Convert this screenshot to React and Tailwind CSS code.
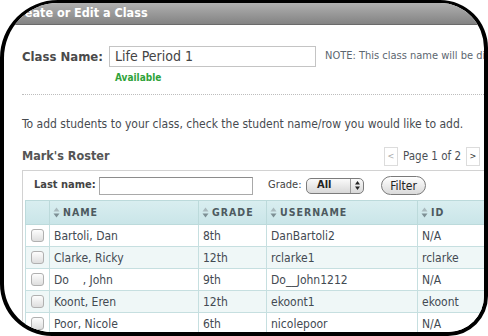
import React from 'react';

const rows = [
  { name: 'Bartoli, Dan', grade: '8th', user: 'DanBartoli2', id: 'N/A' },
  { name: 'Clarke, Ricky', grade: '12th', user: 'rclarke1', id: 'rclarke' },
  { name: 'Do    , John', grade: '9th', user: 'Do__John1212', id: 'N/A' },
  { name: 'Koont, Eren', grade: '12th', user: 'ekoont1', id: 'ekoont' },
  { name: 'Poor, Nicole', grade: '6th', user: 'nicolepoor', id: 'N/A' },
];

function SortArrows() {
  return (
    <svg width="7" height="11" viewBox="0 0 7 11" className="mr-[3px] shrink-0">
      <polygon points="3.5,0.5 6.5,4.5 0.5,4.5" fill="#a9b9bd" />
      <polygon points="0.5,6.5 6.5,6.5 3.5,10.5" fill="#7d8f94" />
    </svg>
  );
}

function Checkbox() {
  return (
    <div className="mx-auto w-[13px] h-[13px] rounded-[3px] border border-[#b0b0b0] bg-gradient-to-b from-[#fdfdfd] to-[#dedede]" />
  );
}

function App() {
  const font = { fontFamily: '"DejaVu Sans Condensed", "DejaVu Sans", sans-serif' };
  return (
    <div className="w-[488px] h-[336px] bg-white overflow-hidden" style={font}>
      <div className="h-full border-[4px] border-t-[3px] border-black rounded-tl-[58px] rounded-tr-[48px] rounded-bl-[52px] rounded-br-[40px] overflow-hidden bg-white">
        <div className="h-[22px] w-[520px] bg-gradient-to-b from-[#b0b0b0] to-[#838383] border-b border-[#6a6a6a] flex items-center pl-[7px]">
          <span className="text-white font-bold text-[12.5px] leading-none whitespace-nowrap">Create or Edit a Class</span>
        </div>

        <div className="pl-[18px] w-[540px] text-[#4b4f55]">
          <div className="flex items-center mt-[21px] h-[21px]">
            <span className="shrink-0 font-bold text-[13px] text-[#4a4a4a] w-[79px] whitespace-nowrap">Class Name:</span>
            <div className="shrink-0 ml-[8px] w-[207px] h-[21px] border border-[#c4c4c4] flex items-center pl-[5px] text-[14px] text-[#444]">
              Life Period 1
            </div>
            <span className="shrink-0 ml-[9px] text-[11px] text-[#5c6670] whitespace-nowrap">NOTE: This class name will be displayed</span>
          </div>
          <div className="mt-[5px] h-[12px] leading-[12px] pl-[93px] text-[10px] font-bold text-[#2fa33a]">Available</div>
          <div className="mt-[10px] border-t border-dotted border-[#bdbdbd]" />
          <div className="mt-[22px] h-[14px] leading-[14px] text-[12px] text-[#474b50] whitespace-nowrap">
            To add students to your class, check the student name/row you would like to add.
          </div>

          <div className="mt-[16px] h-[19px] w-[458px] flex items-center">
            <span className="font-bold text-[12.5px] text-[#555]">Mark's Roster</span>
            <div className="ml-auto flex items-center">
              <div className="w-[14px] h-[19px] border border-[#dcdcdc] flex items-center justify-center text-[9px] text-[#aaa]">&lt;</div>
              <span className="ml-[5px] mr-[5px] text-[11.5px] text-[#4a4f55] whitespace-nowrap">Page 1 of 2</span>
              <div className="w-[14px] h-[19px] border border-[#dcdcdc] flex items-center justify-center text-[9px] text-[#333]">&gt;</div>
            </div>
          </div>

          <div className="mt-[4px] border border-[#d2d2d2] pl-[2px]">
            <div className="h-[29px] flex items-center pl-[9px] text-[11px] text-[#444]">
              <span className="shrink-0 font-bold w-[56px] whitespace-nowrap">Last name:</span>
              <div className="shrink-0 ml-[9px] w-[154px] h-[18px] border border-[#a9a9a9] border-t-[#8c8c8c] bg-white" />
              <span className="shrink-0 ml-[15px] w-[38px] whitespace-nowrap">Grade:</span>
              <div className="shrink-0 w-[58px] h-[16px] rounded-[5px] border border-[#7c7c7c] bg-gradient-to-b from-[#fafafa] to-[#d8d8d8] flex items-center text-[11px] font-bold text-[#222]">
                <span className="pl-[10px] flex-1">All</span>
                <div className="w-[13px] h-full border-l border-[#9a9a9a] flex flex-col items-center justify-center">
                  <svg width="5" height="9" viewBox="0 0 5 9">
                    <polygon points="2.5,0 5,3.5 0,3.5" fill="#222" />
                    <polygon points="0,5.5 5,5.5 2.5,9" fill="#222" />
                  </svg>
                </div>
              </div>
              <div className="shrink-0 ml-[17px] w-[45px] h-[19px] rounded-full border border-[#7a7a7a] bg-gradient-to-b from-[#ffffff] to-[#dadada] flex items-center justify-center text-[12px] text-[#222]">
                Filter
              </div>
            </div>

            <table className="border-collapse table-fixed w-[500px] text-[12px] text-[#434a52]">
              <colgroup>
                <col className="w-[24px]" />
                <col className="w-[149px]" />
                <col className="w-[68px]" />
                <col className="w-[151px]" />
                <col className="w-[108px]" />
              </colgroup>
              <thead>
                <tr className="h-[24px] bg-gradient-to-b from-[#d9eef0] to-[#c9e5e8]">
                  <th className="border border-[#bcdadb]" />
                  {['NAME', 'GRADE', 'USERNAME', 'ID'].map((h) => (
                    <th key={h} className="border border-[#bcdadb] text-left px-[3px]">
                      <div className="flex items-center text-[10.5px] font-bold tracking-[1px] text-[#4d5a60]">
                        <SortArrows />
                        {h}
                      </div>
                    </th>
                  ))}
                </tr>
              </thead>
              <tbody>
                {rows.map((r, i) => (
                  <tr key={r.user} className={i % 2 === 1 ? 'h-[22px] bg-[#eff7f7]' : 'h-[22px] bg-white'}>
                    <td className="border border-[#c6dfe0]"><Checkbox /></td>
                    <td className="border border-[#c6dfe0] pl-[4px] whitespace-pre">{r.name}</td>
                    <td className="border border-[#c6dfe0] pl-[4px]">{r.grade}</td>
                    <td className="border border-[#c6dfe0] pl-[4px]">{r.user}</td>
                    <td className="border border-[#c6dfe0] pl-[4px]">{r.id}</td>
                  </tr>
                ))}
              </tbody>
            </table>
          </div>
        </div>
      </div>
    </div>
  );
}

export default App;
